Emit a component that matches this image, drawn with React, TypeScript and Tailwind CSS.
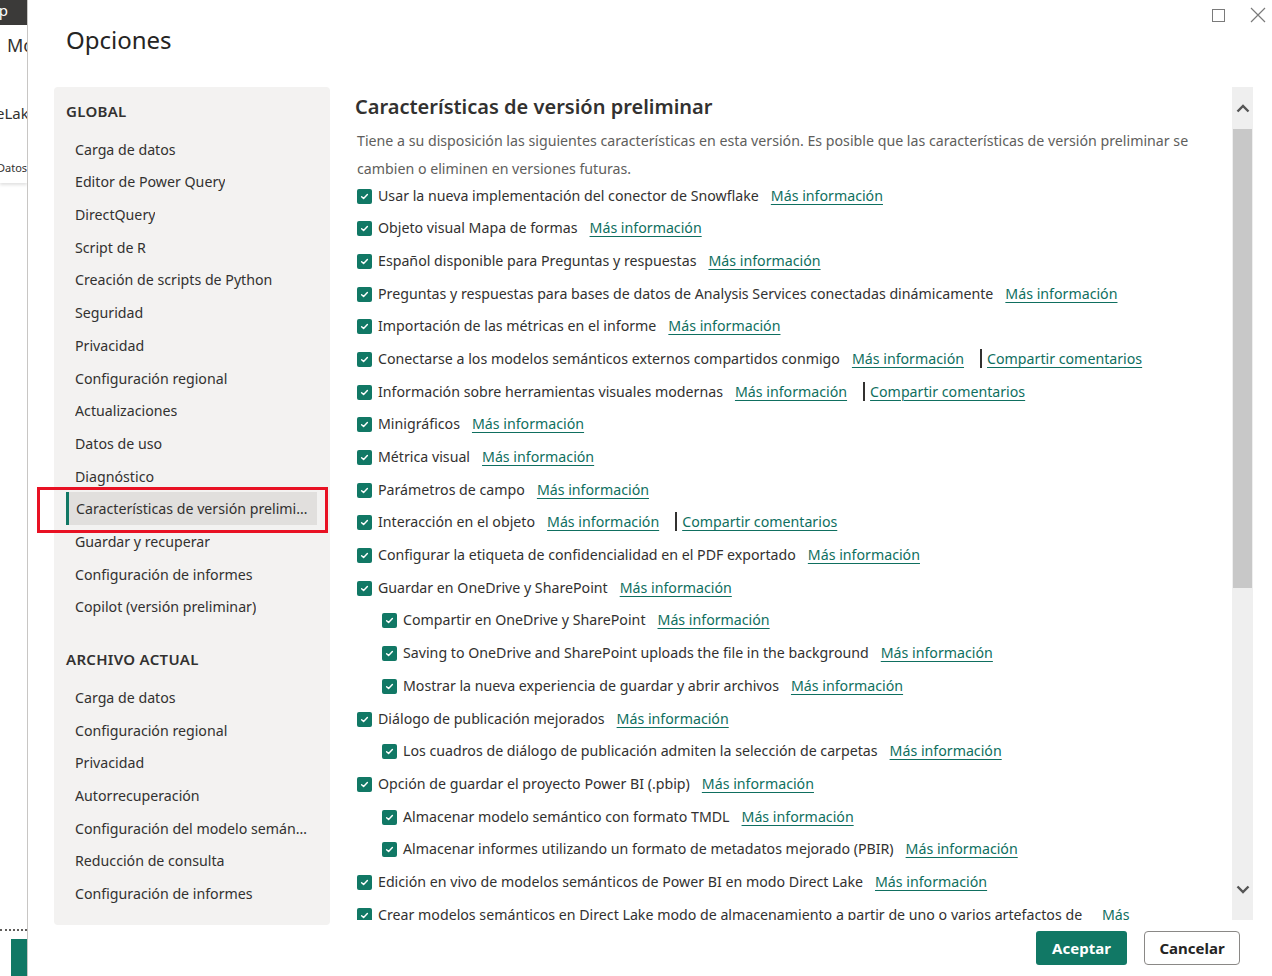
import { ReactNode } from 'react'

type Row = { label: string; sub?: boolean; feedback?: boolean; wrap?: boolean }

const rows: Row[] = [
  { label: 'Usar la nueva implementación del conector de Snowflake' },
  { label: 'Objeto visual Mapa de formas' },
  { label: 'Español disponible para Preguntas y respuestas' },
  { label: 'Preguntas y respuestas para bases de datos de Analysis Services conectadas dinámicamente' },
  { label: 'Importación de las métricas en el informe' },
  { label: 'Conectarse a los modelos semánticos externos compartidos conmigo', feedback: true },
  { label: 'Información sobre herramientas visuales modernas', feedback: true },
  { label: 'Minigráficos' },
  { label: 'Métrica visual' },
  { label: 'Parámetros de campo' },
  { label: 'Interacción en el objeto', feedback: true },
  { label: 'Configurar la etiqueta de confidencialidad en el PDF exportado' },
  { label: 'Guardar en OneDrive y SharePoint' },
  { label: 'Compartir en OneDrive y SharePoint', sub: true },
  { label: 'Saving to OneDrive and SharePoint uploads the file in the background', sub: true },
  { label: 'Mostrar la nueva experiencia de guardar y abrir archivos', sub: true },
  { label: 'Diálogo de publicación mejorados' },
  { label: 'Los cuadros de diálogo de publicación admiten la selección de carpetas', sub: true },
  { label: 'Opción de guardar el proyecto Power BI (.pbip)' },
  { label: 'Almacenar modelo semántico con formato TMDL', sub: true },
  { label: 'Almacenar informes utilizando un formato de metadatos mejorado (PBIR)', sub: true },
  { label: 'Edición en vivo de modelos semánticos de Power BI en modo Direct Lake' },
  {
    label: 'Crear modelos semánticos en Direct Lake modo de almacenamiento a partir de uno o varios artefactos de Fabric',
    wrap: true,
  },
]

const globalItems = [
  'Carga de datos',
  'Editor de Power Query',
  'DirectQuery',
  'Script de R',
  'Creación de scripts de Python',
  'Seguridad',
  'Privacidad',
  'Configuración regional',
  'Actualizaciones',
  'Datos de uso',
  'Diagnóstico',
  'Características de versión preliminar',
  'Guardar y recuperar',
  'Configuración de informes',
  'Copilot (versión preliminar)',
]

const fileItems = [
  'Carga de datos',
  'Configuración regional',
  'Privacidad',
  'Autorrecuperación',
  'Configuración del modelo semántico',
  'Reducción de consulta',
  'Configuración de informes',
]

function Checkbox() {
  return (
    <span className="w-[15px] h-[15px] shrink-0 rounded-[2px] bg-[#117865] flex items-center justify-center">
      <svg width="9" height="9" viewBox="0 0 10 10" fill="none">
        <path d="M1.8 5.2 L4 7.3 L8.2 2.8" stroke="white" strokeWidth="1.6" strokeLinecap="round" strokeLinejoin="round" />
      </svg>
    </span>
  )
}

function Link({ children, wrap }: { children: ReactNode; wrap?: boolean }) {
  return (
    <span className={`text-[#0f6f60] underline underline-offset-[3px] decoration-[1px] ${wrap ? '' : 'whitespace-nowrap'}`}>
      {children}
    </span>
  )
}

function NavHeading({ children, className = '' }: { children: ReactNode; className?: string }) {
  return (
    <div className={`h-[44px] flex items-center px-[12px] text-[15px] font-semibold tracking-[0.3px] text-[#323130] ${className}`}>
      {children}
    </div>
  )
}

function NavItem({ label, selected }: { label: string; selected?: boolean }) {
  if (selected) {
    return (
      <div className="relative h-[32.7px] flex items-center">
        <div className="absolute -left-[17px] right-[2px] -top-[6px] -bottom-[8px] border-[3px] border-[#e81123]" />
        <div className="mx-[12px] w-[251px] h-[33px] flex items-center bg-[#e1dfdd] border-l-[3px] border-[#117865] pl-[7px] pr-[5px]">
          <span className="truncate">{label}</span>
        </div>
      </div>
    )
  }
  return (
    <div className="h-[32.7px] flex items-center pl-[21px] pr-[20px]">
      <span className="truncate">{label}</span>
    </div>
  )
}

export default function App() {
  return (
    <div className="w-[1272px] h-[976px] flex overflow-hidden bg-white text-[#323130] font-['Noto_Sans','Open_Sans',sans-serif]">
      {/* app window behind the dialog */}
      <div className="w-[28px] shrink-0 flex flex-col border-r border-[#c8c6c4] overflow-hidden relative">
        <div className="h-[25px] bg-[#3b3a39] text-white text-[15px] leading-[20px] flex items-start justify-end pr-[19px]">p</div>
        <div className="h-[158px] bg-white shadow-[0_2px_3px_rgba(0,0,0,0.12)] flex flex-col">
          <div className="mt-[8px] text-[18px] leading-[24px] pl-[7px] whitespace-nowrap">Mo</div>
          <div className="mt-[46px] text-[15px] leading-[20px] -ml-[4px] whitespace-nowrap">eLak</div>
          <div className="mt-[38px] text-[11px] leading-[14px] -ml-[3px] whitespace-nowrap">Datos</div>
        </div>
        <div className="flex-1" />
        <div className="h-[2px] border-t-2 border-dotted border-[#605e5c] mb-[8px]" />
        <div className="h-[37px] ml-[11px] bg-[#117865]" />
      </div>

      {/* dialog */}
      <div className="flex-1 flex flex-col relative">
        <div className="h-[87px] flex items-start justify-between">
          <h1 className="ml-[38px] mt-[22px] text-[24px] leading-[36px] font-normal text-[#252423]">Opciones</h1>
          <div className="flex items-center gap-[25px] mt-[7px] mr-[6px]">
            <span className="w-[13px] h-[13px] border border-[#7a7a7a]" />
            <svg width="16" height="16" viewBox="0 0 16 16">
              <path d="M1 1 L15 15 M15 1 L1 15" stroke="#7a7a7a" strokeWidth="1.2" />
            </svg>
          </div>
        </div>

        <div className="flex h-[838px]">
          {/* nav */}
          <nav className="ml-[26px] w-[276px] shrink-0 bg-[#f3f2f1] rounded-[4px] pt-[2px] text-[14.2px]">
            <NavHeading>GLOBAL</NavHeading>
            {globalItems.map((it) => (
              <NavItem key={it} label={it} selected={it === 'Características de versión preliminar'} />
            ))}
            <NavHeading className="mt-[14px]">ARCHIVO ACTUAL</NavHeading>
            {fileItems.map((it) => (
              <NavItem key={it} label={it} />
            ))}
          </nav>

          {/* content */}
          <div className="ml-[25px] flex-1 h-[833px] overflow-hidden">
            <div className="w-[840px] pt-[6px]">
              <h2 className="h-[28px] leading-[28px] text-[20px] font-semibold text-[#323130]">Características de versión preliminar</h2>
              <p className="mt-[6px] pl-[2px] text-[14.2px] leading-[28px] text-[#605e5c]">
                Tiene a su disposición las siguientes características en esta versión. Es posible que las características de versión preliminar se cambien o eliminen en versiones futuras.
              </p>
              <div className="-mt-[4.5px] text-[14.2px]">
                {rows.map((r) => (
                  <div key={r.label} className={`min-h-[32.7px] flex items-start pt-[7px] ${r.sub ? 'pl-[27px]' : 'pl-[2px]'}`}>
                    <span className="mt-[3px]"><Checkbox /></span>
                    <span className={`ml-[6px] leading-[20px] ${r.wrap ? 'w-[712px]' : ''}`}>{r.label}</span>
                    <span className={`ml-[12px] leading-[20px] ${r.wrap ? 'w-[60px]' : 'shrink-0'}`}>
                      <Link wrap={r.wrap}>Más información</Link>
                    </span>
                    {r.feedback && (
                      <span className="ml-[16px] flex items-start leading-[20px]">
                        <span className="w-[2px] h-[19px] bg-[#323130] mr-[5px]" />
                        <Link>Compartir comentarios</Link>
                      </span>
                    )}
                  </div>
                ))}
              </div>
            </div>
          </div>

          {/* scrollbar */}
          <div className="ml-[8px] mr-[19px] w-[21px] h-[833px] bg-[#efefef] flex flex-col items-center">
            <div className="h-[42px] flex items-center justify-center">
              <svg width="14" height="9" viewBox="0 0 14 9">
                <path d="M1.5 7.5 L7 2 L12.5 7.5" stroke="#555" strokeWidth="2.4" fill="none" />
              </svg>
            </div>
            <div className="w-[19px] h-[459px] bg-[#c8c8c8]" />
            <div className="flex-1" />
            <div className="h-[38px] flex items-start justify-center pt-[3px]">
              <svg width="14" height="9" viewBox="0 0 14 9">
                <path d="M1.5 1.5 L7 7 L12.5 1.5" stroke="#555" strokeWidth="2.4" fill="none" />
              </svg>
            </div>
          </div>
        </div>

        <div className="flex justify-end gap-[17px] mr-[32px] mt-[6px]">
          <button className="w-[91px] h-[34px] rounded-[3px] bg-[#117865] text-white text-[15px] font-bold">Aceptar</button>
          <button className="w-[96px] h-[34px] rounded-[4px] bg-white border border-[#8a8886] text-[#252423] text-[15px] font-bold">Cancelar</button>
        </div>
      </div>
    </div>
  )
}
